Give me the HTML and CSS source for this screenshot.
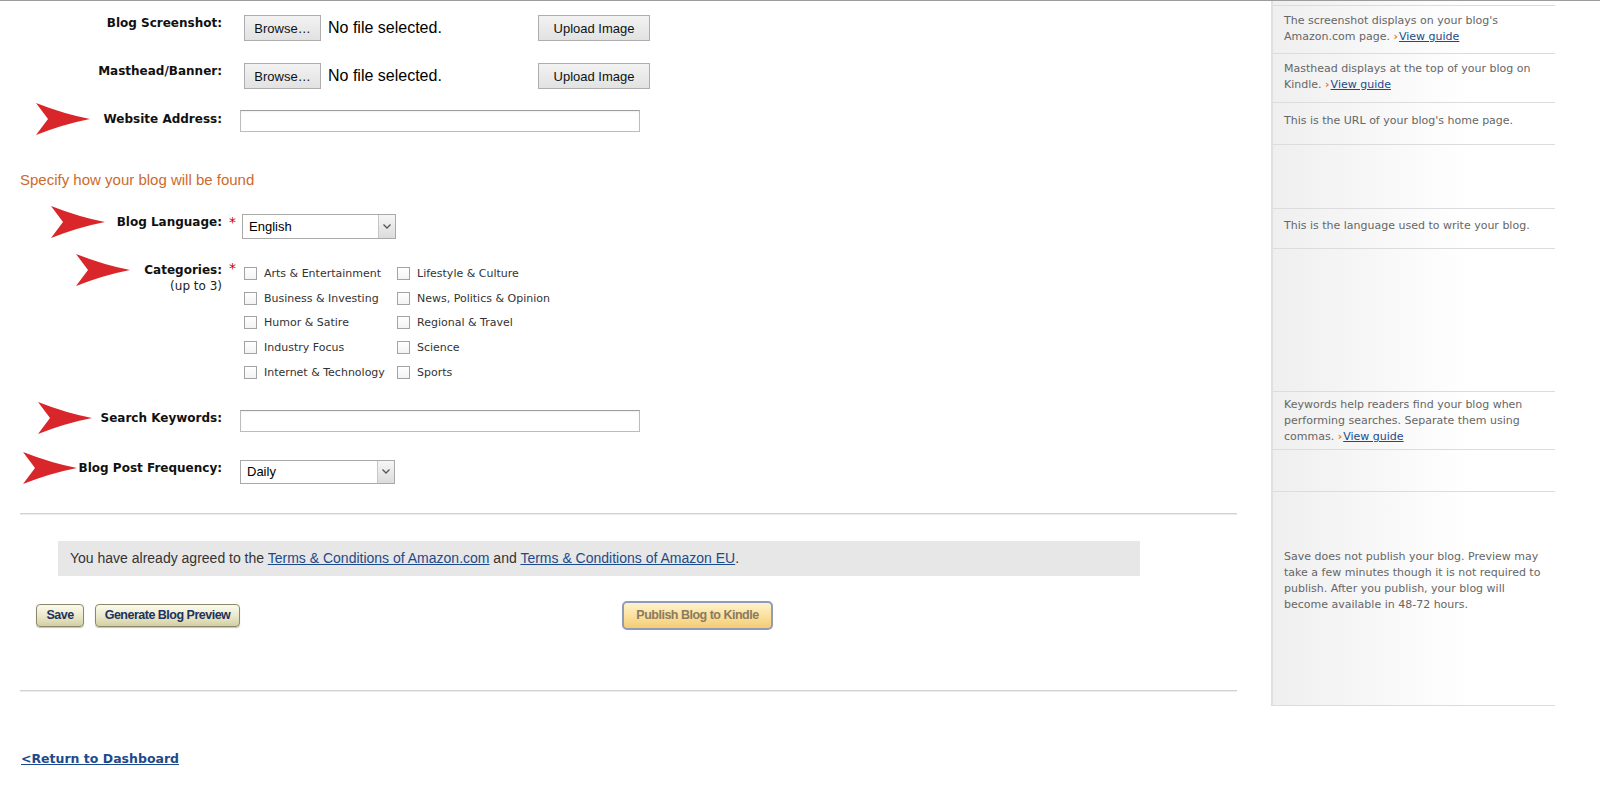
FILE: index.html
```html
<!DOCTYPE html>
<html lang="en">
<head>
    <meta charset="UTF-8">
    <title>Edit Blog Details</title>
    <link rel="stylesheet" href="styles.css">
</head>
<body>
    <div class="page">
        <div class="main">
            <!-- Images -->
            <div class="row row-screenshot">
                <div class="label"><div class="label-line">Blog Screenshot:</div></div>
                <div class="req"></div>
                <div class="field file-field">
                    <div class="file-picker">
                        <button class="btn-browse">Browse…</button>
                        <span class="file-name">No file selected.</span>
                    </div>
                    <button class="btn-upload">Upload Image</button>
                </div>
            </div>

            <div class="row row-masthead">
                <div class="label"><div class="label-line">Masthead/Banner:</div></div>
                <div class="req"></div>
                <div class="field file-field">
                    <div class="file-picker">
                        <button class="btn-browse">Browse…</button>
                        <span class="file-name">No file selected.</span>
                    </div>
                    <button class="btn-upload">Upload Image</button>
                </div>
            </div>

            <div class="row row-website">
                <div class="label">
                    <div class="label-line">
                        <svg class="arrow arrow-wide" width="54" height="32" viewBox="0 0 54 32"><path d="M0 0 Q28 11 54 16 Q28 21 0 32 L12 16 Z" fill="#d8262b"/></svg>
                        Website Address:
                    </div>
                </div>
                <div class="req"></div>
                <div class="field"><input type="text" class="text-input"></div>
            </div>

            <h2 class="section-title">Specify how your blog will be found</h2>

            <div class="row row-language">
                <div class="label">
                    <div class="label-line">
                        <svg class="arrow" width="54" height="32" viewBox="0 0 54 32"><path d="M0 0 Q28 11 54 16 Q28 21 0 32 L12 16 Z" fill="#d8262b"/></svg>
                        Blog Language:
                    </div>
                </div>
                <div class="req">*</div>
                <div class="field">
                    <div class="select select-lang">
                        <select><option>English</option></select>
                        <span class="select-arrow"><svg width="8" height="5" viewBox="0 0 8 5"><path d="M0.5 0.5 L4 4 L7.5 0.5" fill="none" stroke="#555" stroke-width="1.3"/></svg></span>
                    </div>
                </div>
            </div>

            <div class="row row-categories">
                <div class="label">
                    <div class="label-line">
                        <svg class="arrow arrow-wide" width="54" height="32" viewBox="0 0 54 32"><path d="M0 0 Q28 11 54 16 Q28 21 0 32 L12 16 Z" fill="#d8262b"/></svg>
                        Categories:
                    </div>
                    <div class="label-sub">(up to 3)</div>
                </div>
                <div class="req">*</div>
                <div class="field categories">
                    <label class="cat"><input type="checkbox">Arts &amp; Entertainment</label>
                    <label class="cat"><input type="checkbox">Lifestyle &amp; Culture</label>
                    <label class="cat"><input type="checkbox">Business &amp; Investing</label>
                    <label class="cat"><input type="checkbox">News, Politics &amp; Opinion</label>
                    <label class="cat"><input type="checkbox">Humor &amp; Satire</label>
                    <label class="cat"><input type="checkbox">Regional &amp; Travel</label>
                    <label class="cat"><input type="checkbox">Industry Focus</label>
                    <label class="cat"><input type="checkbox">Science</label>
                    <label class="cat"><input type="checkbox">Internet &amp; Technology</label>
                    <label class="cat"><input type="checkbox">Sports</label>
                </div>
            </div>

            <div class="row row-keywords">
                <div class="label">
                    <div class="label-line">
                        <svg class="arrow arrow-narrow" width="54" height="32" viewBox="0 0 54 32"><path d="M0 0 Q28 11 54 16 Q28 21 0 32 L12 16 Z" fill="#d8262b"/></svg>
                        Search Keywords:
                    </div>
                </div>
                <div class="req"></div>
                <div class="field"><input type="text" class="text-input"></div>
            </div>

            <div class="row row-frequency">
                <div class="label">
                    <div class="label-line">
                        <svg class="arrow arrow-tight" width="54" height="32" viewBox="0 0 54 32"><path d="M0 0 Q28 11 54 16 Q28 21 0 32 L12 16 Z" fill="#d8262b"/></svg>
                        Blog Post Frequency:
                    </div>
                </div>
                <div class="req"></div>
                <div class="field">
                    <div class="select select-freq">
                        <select><option>Daily</option></select>
                        <span class="select-arrow"><svg width="8" height="5" viewBox="0 0 8 5"><path d="M0.5 0.5 L4 4 L7.5 0.5" fill="none" stroke="#555" stroke-width="1.3"/></svg></span>
                    </div>
                </div>
            </div>

            <hr class="divider divider-top">

            <div class="terms">You have already agreed to the <a href="#">Terms &amp; Conditions of Amazon.com</a> and <a href="#">Terms &amp; Conditions of Amazon EU</a>.</div>

            <div class="actions">
                <button class="btn-beige btn-save">Save</button>
                <button class="btn-beige btn-preview">Generate Blog Preview</button>
                <button class="btn-publish">Publish Blog to Kindle</button>
            </div>

            <hr class="divider divider-bottom">

            <a href="#" class="back-link">&lt;Return to Dashboard</a>
        </div>

        <div class="sidebar">
            <div class="note note-screenshot">The screenshot displays on your blog's<br>Amazon.com page. <span class="guide-arrow">›</span><a href="#">View guide</a></div>
            <div class="note note-masthead">Masthead displays at the top of your blog on<br>Kindle. <span class="guide-arrow">›</span><a href="#">View guide</a></div>
            <div class="note note-website">This is the URL of your blog's home page.</div>
            <div class="note note-spacer1"></div>
            <div class="note note-language">This is the language used to write your blog.</div>
            <div class="note note-categories"></div>
            <div class="note note-keywords">Keywords help readers find your blog when<br>performing searches. Separate them using<br>commas. <span class="guide-arrow">›</span><a href="#">View guide</a></div>
            <div class="note note-frequency"></div>
            <div class="note note-publish">Save does not publish your blog. Preview may<br>take a few minutes though it is not required to<br>publish. After you publish, your blog will<br>become available in 48-72 hours.</div>
        </div>
    </div>
</body>
</html>
```

FILE: styles.css
```css
* {
    margin: 0;
    padding: 0;
    box-sizing: border-box;
}

body {
    font-family: "DejaVu Sans", Verdana, sans-serif;
    font-size: 11px;
    color: #000;
    background-color: #fff;
}

a {
    color: #1d4a8a;
}

.page {
    display: flex;
    align-items: flex-start;
    border-top: 1px solid #9c9c9c;
}

.main {
    width: 1217px;
    margin-left: 20px;
}

/* Form rows */
.row {
    display: flex;
    align-items: flex-start;
}

.row-screenshot { margin-top: 14px; }
.row-masthead { margin-top: 22px; }
.row-website { margin-top: 21px; }
.row-language { margin-top: 25px; }
.row-categories { margin-top: 21px; }
.row-keywords { margin-top: 25px; }
.row-frequency { margin-top: 28px; }

.row-website .label,
.row-categories .label {
    padding-top: 1px;
}

.row-categories .label-line {
    height: 17px;
}

.label {
    width: 202px;
    font-size: 12px;
    font-weight: bold;
    color: #111;
}

.label-line {
    height: 16px;
    display: flex;
    justify-content: flex-end;
    align-items: center;
    white-space: nowrap;
}

.label-sub {
    font-weight: normal;
    text-align: right;
    line-height: 17px;
    color: #222;
}

.arrow {
    flex-shrink: 0;
    margin-right: 12px;
}

.arrow-wide { margin-right: 14px; }
.arrow-narrow { margin-right: 9px; }
.arrow-tight { margin-right: 2px; }

.req {
    width: 18px;
    padding-left: 7px;
    color: #c00;
    font-size: 14px;
    line-height: 17px;
}

.field {
    display: flex;
    align-items: center;
}

/* File pickers */
.file-field {
    margin-left: 4px;
}

.file-picker {
    width: 294px;
    display: flex;
    align-items: center;
}

.btn-browse,
.btn-upload {
    height: 26px;
    font-family: "Liberation Sans", Arial, sans-serif;
    font-size: 13px;
    color: #111;
    background: linear-gradient(#f2f2f2, #e2e2e2);
    border: 1px solid #adadad;
    border-radius: 0;
}

.btn-browse {
    width: 77px;
}

.btn-upload {
    width: 112px;
}

.file-name {
    margin-left: 7px;
    font-family: "Liberation Sans", Arial, sans-serif;
    font-size: 16px;
}

.text-input {
    width: 400px;
    height: 22px;
    border: 1px solid #bcbcbc;
    border-top-color: #9d9d9d;
    box-shadow: inset 0 1px 2px rgba(0, 0, 0, 0.06);
}

.section-title {
    margin-top: 39px;
    font-family: "Liberation Sans", Arial, sans-serif;
    font-size: 15px;
    font-weight: normal;
    line-height: 18px;
    color: #cd6a2c;
}

/* Selects */
.select {
    display: flex;
    border: 1px solid #a9a9a9;
    background-color: #fff;
}

.select select {
    flex: 1;
    appearance: none;
    border: none;
    background: transparent;
    padding-left: 6px;
    font-family: "Liberation Sans", Arial, sans-serif;
    font-size: 13px;
    color: #000;
    outline: none;
}

.select-lang {
    width: 154px;
    height: 25px;
    margin-left: 2px;
}

.select-freq {
    width: 155px;
    height: 24px;
}

.select-arrow {
    width: 17px;
    display: flex;
    align-items: center;
    justify-content: center;
    border-left: 1px solid #c6c6c6;
    background: linear-gradient(#f6f6f6, #dcdcdc);
}

/* Categories */
.categories {
    display: grid;
    grid-template-columns: 153px auto;
    grid-auto-rows: 24.75px;
    align-items: center;
    margin-left: 4px;
    margin-top: 1px;
}

.cat {
    display: flex;
    align-items: center;
    font-size: 11px;
    color: #333;
    white-space: nowrap;
}

.cat input {
    appearance: none;
    width: 13px;
    height: 13px;
    margin-right: 7px;
    border: 1px solid #a3a3a3;
    background: linear-gradient(#fff, #f3f3f3);
}

/* Bottom */
.divider {
    border: none;
    border-top: 1px solid #d2d2d2;
    border-bottom: 1px solid #ececec;
}

.divider-top { margin-top: 29px; }
.divider-bottom { margin-top: 60px; }

.terms {
    margin: 26px 0 0 38px;
    width: 1082px;
    height: 35px;
    padding-left: 12px;
    line-height: 35px;
    white-space: nowrap;
    background-color: #e7e7e7;
    font-family: "Liberation Sans", Arial, sans-serif;
    font-size: 14px;
    color: #333;
}

.actions {
    margin: 25px 0 0 16px;
    height: 29px;
    display: flex;
    align-items: center;
}

.btn-beige,
.btn-publish {
    font-family: "Liberation Sans", Arial, sans-serif;
    font-weight: bold;
    font-size: 12.5px;
    letter-spacing: -0.5px;
    cursor: pointer;
}

.btn-beige {
    height: 23px;
    margin-right: 11px;
    color: #22325f;
    background: linear-gradient(#fbfbee, #e9e7c8 55%, #d3cfa2);
    border: 1px solid #8c896a;
    border-radius: 4px;
    box-shadow: 0 1px 1px rgba(0, 0, 0, 0.25);
}

.btn-save { width: 48px; }
.btn-preview { width: 145px; }

.btn-publish {
    height: 29px;
    width: 151px;
    margin-left: 371px;
    color: #8a7b5e;
    background: linear-gradient(#fff2cb, #fbdf9b 55%, #f4cc74);
    border: 2px solid #8e9cba;
    border-radius: 5px;
}

.back-link {
    display: inline-block;
    margin: 59px 0 0 1px;
    font-size: 12.5px;
    font-weight: bold;
    line-height: 16px;
    color: #1c4a8b;
}

/* Help sidebar */
.sidebar {
    width: 284px;
    margin-left: 34px;
    padding-top: 4px;
    border-left: 2px solid #e0e0e0;
    border-bottom: 1px solid #dcdcdc;
    background: linear-gradient(to right, #efefef, #ffffff 70%);
}

.note {
    border-top: 1px solid #dcdcdc;
    padding: 7px 0 0 11px;
    font-size: 11px;
    line-height: 16px;
    white-space: nowrap;
    color: #666;
}

.note-screenshot { height: 48px; }
.note-masthead { height: 49px; }
.note-website { height: 42px; padding-top: 10px; }
.note-spacer1 { height: 64px; }
.note-language { height: 40px; padding-top: 9px; }
.note-categories { height: 143px; }
.note-keywords { height: 58px; padding-top: 5px; }
.note-frequency { height: 42px; }
.note-publish { height: 214px; padding-top: 57px; }

.guide-arrow {
    color: #e47911;
    font-weight: bold;
    margin-right: 1px;
}
```
